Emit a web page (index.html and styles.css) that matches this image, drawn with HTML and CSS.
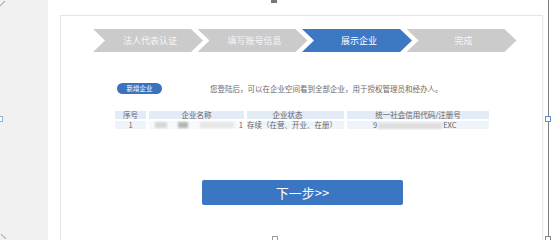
FILE: index.html
```html
<!DOCTYPE html>
<html lang="zh-CN">
<head>
<meta charset="utf-8">
<title>展示企业</title>
<link rel="stylesheet" href="styles.css">
</head>
<body>
<div class="screen">
  <aside class="gutter"></aside>
  <main class="main">
    <section class="card">
      <ol class="steps">
        <li class="step">法人代表认证</li>
        <li class="step">填写账号信息</li>
        <li class="step step-active">展示企业</li>
        <li class="step">完成</li>
      </ol>
      <div class="intro">
        <button class="add-btn" type="button">新增企业</button>
        <p class="desc">您登陆后，可以在企业空间看到全部企业，用于授权管理员和经办人。</p>
      </div>
      <table class="ent-table">
        <thead>
          <tr>
            <th class="c-no">序号</th>
            <th class="c-name">企业名称</th>
            <th class="c-state">企业状态</th>
            <th class="c-code">统一社会信用代码/注册号</th>
          </tr>
        </thead>
        <tbody>
          <tr>
            <td class="c-no">1</td>
            <td class="c-name"><span class="blur b1"></span><span class="blur b2"></span><span class="blur b3"></span><span class="name-end">1</span></td>
            <td class="c-state">存续（在营、开业、在册）</td>
            <td class="c-code"><span class="code-start">9</span><span class="blur b4"></span><span>EXC</span></td>
          </tr>
        </tbody>
      </table>
      <div class="actions">
        <button class="next-btn" type="button">下一步&gt;&gt;</button>
      </div>
    </section>
  </main>
  <div class="edge"></div>
</div>
<span class="handle h-top"></span>
<span class="handle h-left"></span>
<span class="handle h-right"></span>
<span class="handle h-bottom"></span>
<span class="handle h-br"></span>
<span class="corner c-tl"></span>
<span class="corner c-bl"></span>
</body>
</html>
```

FILE: styles.css
```css
* { box-sizing: border-box; }
html, body {
  margin: 0;
  padding: 0;
  width: 551px;
  height: 240px;
  overflow: hidden;
  background: #ffffff;
  font-family: "Noto Sans CJK SC", "Noto Sans", sans-serif;
}
.screen {
  display: flex;
  width: 551px;
  height: 240px;
  overflow: hidden;
}
.gutter {
  width: 48px;
  flex: none;
  background: #f1f1f1;
}
.main {
  width: 500px;
  flex: none;
  background: #ffffff;
  padding: 15px 5px 0 12px;
}
.edge {
  width: 1px;
  flex: none;
  background: #7d7d7d;
}
.card {
  height: 240px;
  border: 1px solid #e6e6e6;
  box-shadow: 0 0 2px rgba(0,0,0,0.04);
  background: #fff;
}
.steps {
  list-style: none;
  margin: 13px 0 0 0;
  padding: 0 0 0 32px;
  display: flex;
}
.step {
  width: 110px;
  height: 23px;
  flex: none;
  margin-right: -5.5px;
  background: #cbcbcb;
  color: #f6f6f6;
  font-size: 9px;
  line-height: 23px;
  text-align: center;
  padding-left: 4px;
  clip-path: polygon(0 0, calc(100% - 12px) 0, 100% 50%, calc(100% - 12px) 100%, 0 100%, 12px 50%);
}
.step-active {
  background: #3d78c3;
  color: #ffffff;
}
.intro {
  display: flex;
  align-items: center;
  margin-top: 31px;
  padding-left: 56px;
}
.add-btn {
  margin: 0;
  width: 45px;
  height: 11px;
  padding: 0;
  border: none;
  border-radius: 6px;
  background: #3a72bd;
  color: #ffffff;
  font-family: inherit;
  font-size: 6.5px;
  line-height: 11px;
}
.desc {
  margin: 0 0 0 48px;
  font-size: 7.5px;
  line-height: 11px;
  color: #6a6a6a;
}
.ent-table {
  margin: 15px 0 0 51px;
  border-collapse: separate;
  border-spacing: 3px 2px;
  font-size: 7.5px;
  color: #666;
}
.ent-table th,
.ent-table td {
  height: 8px;
  padding: 0;
  line-height: 8px;
  font-weight: normal;
  white-space: nowrap;
}
.ent-table th {
  background: #e3ebf6;
  text-align: center;
}
.ent-table td {
  background: #eff4fa;
}
.c-no { width: 31px; text-align: center; }
.c-name { width: 95px; }
.c-state { width: 97px; }
.c-code { width: 142px; }
th.c-state { padding-right: 16px; }
td.c-no { text-align: center; }
td.c-name {
  background: #f7f9fc;
  display: flex;
  align-items: center;
  padding-left: 6px;
}
td.c-state { text-align: left; }
td.c-code { padding-left: 26px; }
.blur {
  display: inline-block;
  height: 6px;
  vertical-align: middle;
  filter: blur(1.2px);
}
.b1 { width: 12px; background: #d6d6d6; }
.b2 { width: 10px; margin-left: 11px; background: #b4b4b4; }
.b3 { width: 34px; margin-left: 12px; background: #e6e6e6; }
.name-end { margin-left: auto; padding-right: 1px; }
.b4 { width: 64px; margin: 0 1px; background: #dedede; }
.actions {
  margin-top: 48px;
  padding-left: 141px;
}
.next-btn {
  width: 201px;
  height: 25px;
  border: none;
  border-radius: 2px;
  background: #3b76c2;
  color: #ffffff;
  font-family: inherit;
  font-size: 13px;
  line-height: 25px;
  padding: 0;
}
.handle {
  position: absolute;
  width: 6px;
  height: 6px;
  background: #ffffff;
  border: 1px solid #8fa9c6;
}
.h-top { left: 271px; top: -3px; background: #777; border-color: #777; }
.h-left { left: -3px; top: 116px; border-color: #8fb3d6; }
.h-right { left: 545px; top: 116px; border-color: #5f8fc4; }
.h-bottom { left: 272px; top: 236px; border-color: #9a9a9a; }
.h-br { left: 545px; top: 236px; border-color: #888; }
.corner {
  position: absolute;
  width: 7px;
  height: 1px;
  background: #aaa;
}
.c-tl { left: -1px; top: 3px; transform: rotate(-45deg); }
.c-bl { left: 0; top: 236px; transform: rotate(45deg); }
```
